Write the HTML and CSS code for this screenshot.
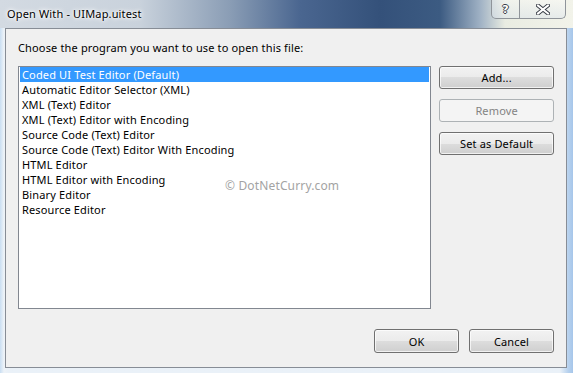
FILE: index.html
```html
<!DOCTYPE html>
<html>
<head>
<meta charset="utf-8">
<title>Open With</title>
<link rel="stylesheet" href="styles.css">
</head>
<body>
<div class="window">
  <div class="titlebar">
    <span class="title">Open With - UIMap.uitest</span>
    <div class="caption">
      <div class="cap help"><span>?</span></div>
      <div class="cap close">
        <svg width="14" height="11" viewBox="0 0 14 11">
          <path d="M2 1.5 L12 9.5 M12 1.5 L2 9.5" stroke="#3a3f48" stroke-width="4" stroke-linecap="square"/>
          <path d="M2 1.5 L12 9.5 M12 1.5 L2 9.5" stroke="#ffffff" stroke-width="2" stroke-linecap="square"/>
        </svg>
      </div>
    </div>
  </div>
  <div class="panel">
    <div class="label">Choose the program you want to use to open this file:</div>
    <div class="main">
      <div class="list">
        <div class="item selected">Coded UI Test Editor (Default)</div>
        <div class="item">Automatic Editor Selector (XML)</div>
        <div class="item">XML (Text) Editor</div>
        <div class="item">XML (Text) Editor with Encoding</div>
        <div class="item">Source Code (Text) Editor</div>
        <div class="item">Source Code (Text) Editor With Encoding</div>
        <div class="item">HTML Editor</div>
        <div class="item">HTML Editor with Encoding</div>
        <div class="item">Binary Editor</div>
        <div class="item">Resource Editor</div>
        <div class="watermark">© DotNetCurry.com</div>
      </div>
      <div class="side">
        <div class="btn">Add...</div>
        <div class="btn disabled">Remove</div>
        <div class="btn">Set as Default</div>
      </div>
    </div>
    <div class="footer">
      <div class="btn wide">OK</div>
      <div class="btn wide">Cancel</div>
    </div>
  </div>
</div>
</body>
</html>
```

FILE: styles.css
```css
html, body {
  margin: 0;
  padding: 0;
}
body {
  width: 573px;
  height: 373px;
  overflow: hidden;
  font-family: "Noto Sans", "Open Sans", sans-serif;
  font-size: 11px;
  letter-spacing: 0.15px;
  color: #000;
}
.window {
  width: 573px;
  height: 373px;
  display: flex;
  flex-direction: column;
  background:
    linear-gradient(90deg, #c9def2 0, #eef3f8 4px, rgba(238,243,248,0) 8px, rgba(238,243,248,0) 560px, #b8d2ee 568px, #a6c6ea 573px),
    linear-gradient(180deg, #dbe3ea 0, #e6edf3 60px, #eaf1f8 373px);
}
.titlebar {
  height: 28px;
  flex: none;
  display: flex;
  align-items: flex-start;
  background: linear-gradient(90deg, #d3dae2 0, #c9d2dc 140px, #8a9db5 230px, #4a6690 300px, #34517a 380px, #3c5b82 440px, #9fb1c4 480px, #e9ece2 505px, #f2f3ea 573px);
}
.title {
  padding: 6px 0 0 7px;
  line-height: 15px;
  color: #000;
  text-shadow: 0 0 6px #fff, 0 0 4px #fff, 0 0 2px #fff;
}
.caption {
  margin-left: auto;
  margin-right: 7px;
  display: flex;
  height: 18px;
  border: 1px solid #8f949a;
  border-top: none;
  border-radius: 0 0 5px 5px;
  background: linear-gradient(180deg, rgba(255,255,255,0.35), rgba(220,228,236,0.5));
  overflow: hidden;
}
.cap {
  display: flex;
  align-items: center;
  justify-content: center;
}
.help {
  width: 27px;
  border-right: 1px solid #8f949a;
}
.help span {
  font-family: "DejaVu Sans", sans-serif;
  font-weight: bold;
  font-size: 11px;
  line-height: 13px;
  color: #fff;
  text-shadow: 1px 0 0 #3a3f48, -1px 0 0 #3a3f48, 0 1px 0 #3a3f48, 0 -1px 0 #3a3f48;
}
.close {
  width: 45px;
}
.panel {
  flex: 1;
  margin: 0 6px 5px 5px;
  border: 1px solid #878d96;
  background: #f0f0f0;
  padding: 11px 12px 14px 12px;
  display: flex;
  flex-direction: column;
}
.label {
  line-height: 15px;
  height: 15px;
  margin-bottom: 11px;
}
.main {
  display: flex;
  gap: 8px;
  height: 243px;
}
.list {
  position: relative;
  width: 410px;
  height: 241px;
  border: 1px solid #828790;
  background: #fff;
  padding: 0 1px;
}
.item {
  height: 15px;
  line-height: 15px;
  padding-left: 2px;
  white-space: nowrap;
}
.item.selected {
  background: #3399ff;
  color: #fff;
}
.watermark {
  position: absolute;
  left: 206px;
  top: 111px;
  color: #a3a3a3;
  font-size: 12px;
  line-height: 15px;
  white-space: nowrap;
}
.side {
  display: flex;
  flex-direction: column;
  gap: 10px;
  width: 115px;
}
.btn {
  box-sizing: border-box;
  height: 23px;
  border: 1px solid #707070;
  border-radius: 3px;
  background: linear-gradient(180deg, #f2f2f2 0, #ebebeb 50%, #dddddd 50%, #cfcfcf 100%);
  box-shadow: inset 0 0 0 1px rgba(255,255,255,0.7);
  display: flex;
  align-items: center;
  justify-content: center;
  line-height: 15px;
  white-space: nowrap;
}
.btn.disabled {
  border-color: #adb2b5;
  background: #f4f4f4;
  box-shadow: none;
  color: #838383;
}
.footer {
  margin-top: 20px;
  display: flex;
  justify-content: flex-end;
  gap: 10px;
}
.btn.wide {
  width: 85px;
  height: 24px;
}
```
